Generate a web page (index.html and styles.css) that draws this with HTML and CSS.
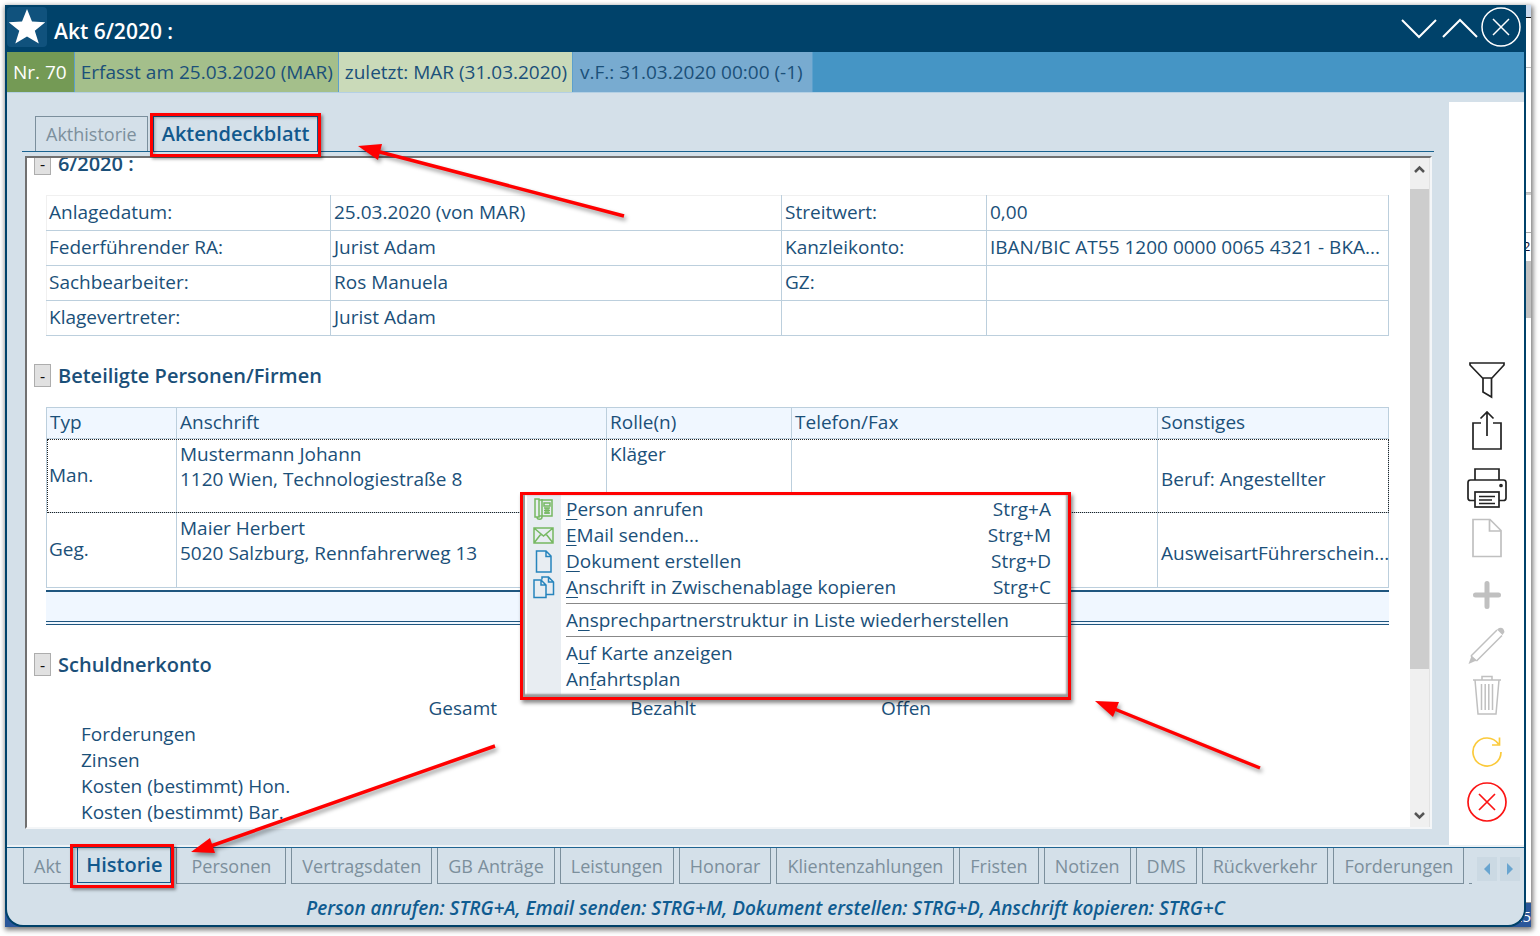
FILE: index.html
```html
<!DOCTYPE html>
<html lang="de">
<head>
<meta charset="utf-8">
<title>Akt 6/2020</title>
<link rel="stylesheet" href="styles.css">
</head>
<body>
<div class="desktop">
  <div class="behind" aria-hidden="true">
    <div class="behind-title"></div>
    <div class="behind-tool"></div>
    <div class="behind-area"></div>
    <div class="behind-ruler"></div>
    <div class="behind-line">2</div>
    <div class="behind-thumb"></div>
    <div class="behind-rest"></div>
    <div class="behind-status">25</div>
  </div>

  <main class="window">
    <header class="titlebar">
      <button class="star" type="button" aria-label="Favorit">
        <svg viewBox="0 0 40 40"><path d="M20 2l5 12.600 13.300.6-10.500 8.600 4 12.700L20 29.500 8.300 36.500l4-12.700L1.700 15.200l13.300-.6z"/></svg>
      </button>
      <h1 class="title">Akt 6/2020 :</h1>
      <div class="window-buttons">
        <button type="button" aria-label="Nach unten"><svg viewBox="0 0 40 40"><path d="M3 13l17 17 17-17"/></svg></button>
        <button type="button" aria-label="Nach oben"><svg viewBox="0 0 40 40"><path d="M3 30l17-17 17 17"/></svg></button>
        <button type="button" aria-label="Schließen"><svg class="thin" viewBox="0 0 40 40"><circle cx="20" cy="20" r="19"/><path d="M12 12l16 16M28 12L12 28"/></svg></button>
      </div>
    </header>

    <div class="status">
      <span class="status-nr">Nr. 70</span>
      <span class="status-created">Erfasst am 25.03.2020 (MAR)</span>
      <span class="status-last">zuletzt: MAR (31.03.2020)</span>
      <span class="status-due">v.F.: 31.03.2020 00:00 (-1)</span>
    </div>

    <div class="body">
      <section class="content">
        <nav class="tabs tabs-top">
          <button class="tab" type="button">Akthistorie</button>
          <button class="tab active marked" type="button">Aktendeckblatt</button>
        </nav>

        <div class="panel">
          <div class="sheet">
            <div class="section-head section-first"><button class="fold" type="button" aria-label="Zuklappen">-</button><h2>6/2020 :</h2></div>
            <table class="grid facts">
              <colgroup><col class="f-label"><col><col class="f-label2"><col class="f-value2"></colgroup>
              <tr><th>Anlagedatum:</th><td>25.03.2020 (von MAR)</td><td>Streitwert:</td><td>0,00</td></tr>
              <tr><th>Federführender RA:</th><td>Jurist Adam</td><td>Kanzleikonto:</td><td>IBAN/BIC AT55 1200 0000 0065 4321 - BKA...</td></tr>
              <tr><th>Sachbearbeiter:</th><td>Ros Manuela</td><td>GZ:</td><td></td></tr>
              <tr><th>Klagevertreter:</th><td>Jurist Adam</td><td></td><td></td></tr>
            </table>

            <div class="section-head"><button class="fold" type="button" aria-label="Zuklappen">-</button><h2>Beteiligte Personen/Firmen</h2></div>
            <table class="grid people">
              <colgroup><col class="p-type"><col><col class="p-role"><col class="p-phone"><col class="p-misc"></colgroup>
              <thead><tr><th>Typ</th><th>Anschrift</th><th>Rolle(n)</th><th>Telefon/Fax</th><th>Sonstiges</th></tr></thead>
              <tbody>
                <tr class="selected"><td>Man.</td><td class="top">Mustermann Johann<br>1120 Wien, Technologiestraße 8</td><td class="top">Kläger</td><td></td><td class="misc">Beruf: Angestellter</td></tr>
                <tr><td>Geg.</td><td class="top">Maier Herbert<br>5020 Salzburg, Rennfahrerweg 13</td><td></td><td></td><td class="misc">AusweisartFührerschein...</td></tr>
              </tbody>
            </table>
            <div class="table-foot"></div>

            <div class="section-head section-account"><button class="fold" type="button" aria-label="Zuklappen">-</button><h2>Schuldnerkonto</h2></div>
            <table class="account">
              <thead><tr><td></td><th>Gesamt</th><th>Bezahlt</th><th>Offen</th><td></td></tr></thead>
              <tbody>
                <tr><th colspan="5">Forderungen</th></tr>
                <tr><th colspan="5">Zinsen</th></tr>
                <tr><th colspan="5">Kosten (bestimmt) Hon.</th></tr>
                <tr><th colspan="5">Kosten (bestimmt) Bar.</th></tr>
              </tbody>
            </table>
          </div>
          <div class="scrollbar">
            <button type="button" aria-label="Nach oben blättern"><svg viewBox="0 0 19 31"><path d="M5 14l4.500-4.500L14 14"/></svg></button>
            <div class="track"><div class="thumb"></div></div>
            <button type="button" aria-label="Nach unten blättern"><svg viewBox="0 0 19 31"><path d="M5 17l4.500 4.500L14 17"/></svg></button>
          </div>
        </div>
      </section>

      <aside class="tools">
        <div class="tool-group">
          <button type="button" aria-label="Filtern"><svg viewBox="0 0 40 40"><path d="M3 2h34v2L25 17H15.500L3 4zM16 17v14l8.500 5V17"/></svg></button>
          <button type="button" aria-label="Exportieren"><svg viewBox="0 0 40 40"><path d="M14 12H6v26h28V12h-8M20 25V1M13.500 7.500L20 1l6.500 6.500"/></svg></button>
        </div>
        <div class="tool-group">
          <button type="button" aria-label="Drucken"><svg viewBox="0 0 40 40"><path d="M8 12V1h24v11M8 32.500H3.500q-2.500 0-2.500-2.500V14.500Q1 12 3.500 12h33q2.500 0 2.500 2.500V30q0 2.500-2.500 2.500H32"/><rect x="8" y="24" width="24" height="15"/><path d="M12 28.500h16M12 32h13M12 35.500h16"/><circle cx="34" cy="17.500" r="1"/></svg></button>
          <button class="off" type="button" aria-label="Neues Dokument"><svg viewBox="0 0 40 40"><path d="M6 1.500h17L34 12.500v26H6zM22.500 1.500V13H34"/></svg></button>
        </div>
        <div class="tool-group">
          <button class="off" type="button" aria-label="Hinzufügen"><svg viewBox="0 0 40 40"><path class="bold" d="M20 8.500v23M8.500 20h23"/></svg></button>
          <button class="off" type="button" aria-label="Bearbeiten"><svg viewBox="0 0 40 40"><path d="M4 31L30 5M9.500 36L35 10.500" class="pencil"/><path d="M4 31l5.500 5" class="thin"/><path d="M30 4.500l2-1.500q4.500-1.500 5.500 4L35.500 10zM1.500 39l3-8 5 4.500z" class="fill"/></svg></button>
          <button class="off" type="button" aria-label="Löschen"><svg viewBox="0 0 40 40"><path d="M6 5h28M15 5V1.500h10V5M8 5l3 34h18l3-34M14.500 9v26M18.200 9v26M21.800 9v26M25.500 9v26" class="thin"/></svg></button>
        </div>
        <div class="tool-group">
          <button class="refresh" type="button" aria-label="Aktualisieren"><svg viewBox="0 0 40 40"><path d="M34 20A14 14 0 1 1 31.500 12M32.500 5.500V13H25"/></svg></button>
          <button class="cancel" type="button" aria-label="Abbrechen"><svg viewBox="0 0 40 40"><circle cx="20" cy="20" r="19"/><path d="M12 12l16 16M28 12L12 28"/></svg></button>
        </div>
      </aside>
    </div>

    <nav class="tabs tabs-bottom">
      <button class="tab" type="button">Akt</button>
      <button class="tab active marked" type="button">Historie</button>
      <button class="tab wide" type="button">Personen</button>
      <button class="tab" type="button">Vertragsdaten</button>
      <button class="tab" type="button">GB Anträge</button>
      <button class="tab" type="button">Leistungen</button>
      <button class="tab" type="button">Honorar</button>
      <button class="tab" type="button">Klientenzahlungen</button>
      <button class="tab" type="button">Fristen</button>
      <button class="tab" type="button">Notizen</button>
      <button class="tab" type="button">DMS</button>
      <button class="tab" type="button">Rückverkehr</button>
      <button class="tab" type="button">Forderungen</button>
      <span class="tab-rest"></span>
      <span class="tab-scroll">
        <button type="button" aria-label="Tabs zurück"><svg viewBox="0 0 20 24"><path d="M13 6v12L7 12z"/></svg></button>
        <button type="button" aria-label="Tabs vor"><svg viewBox="0 0 20 24"><path d="M7 6v12l6-6z"/></svg></button>
      </span>
    </nav>

    <footer class="hint">Person anrufen: STRG+A, Email senden: STRG+M, Dokument erstellen: STRG+D, Anschrift kopieren: STRG+C</footer>
  </main>

  <div class="menu" role="menu">
    <button type="button" role="menuitem"><svg class="green" viewBox="0 0 24 24"><path d="M3 2h4v18H3zM7 3h13v16H7zM10 2v18M12 6h6v3h-6zM12 11h6M12 13.500h6M12 16h6M14 11v6M16 11v6M5 20c0 3 5 3 5 0"/></svg><span><u>P</u>erson anrufen</span><kbd>Strg+A</kbd></button>
    <button type="button" role="menuitem"><svg class="green" viewBox="0 0 24 24"><path d="M2 5h19v15H2zM2 5l9.500 8L21 5M2 20l7-9M21 20l-7-9"/></svg><span><u>E</u>Mail senden...</span><kbd>Strg+M</kbd></button>
    <button type="button" role="menuitem"><svg viewBox="0 0 24 24"><path d="M4.500 2H14l5 5v16H4.500zM14 2v5.500h5"/></svg><span><u>D</u>okument erstellen</span><kbd>Strg+D</kbd></button>
    <button type="button" role="menuitem"><svg viewBox="0 0 24 24"><path d="M2 5h7l5 5v12.500H2zM9 5v5h5M10 4.500V2h6.500l5 5v12.500H14M16.500 2v5h5"/></svg><span><u>A</u>nschrift in Zwischenablage kopieren</span><kbd>Strg+C</kbd></button>
    <hr>
    <button type="button" role="menuitem"><i></i><span>A<u>n</u>sprechpartnerstruktur in Liste wiederherstellen</span></button>
    <hr>
    <button type="button" role="menuitem"><i></i><span>A<u>u</u>f Karte anzeigen</span></button>
    <button type="button" role="menuitem"><i></i><span>An<u>f</u>ahrtsplan</span></button>
  </div>

  <svg class="arrows" width="1540" height="936" viewBox="0 0 1540 936" aria-hidden="true">
    <path class="shaft" d="M624 216L376 151M495 746L208 847M1260 768L1112 708"/>
    <path class="head" d="M358 146l24-2-4 16zM191 852l19-14 5 15zM1095 701l24 1-6 15z"/>
  </svg>
</div>
</body>
</html>
```
FILE: styles.css
```css
* { box-sizing: border-box; }

body {
  margin: 0;
  background: #fff;
  color: #1b5079;
  font: 19px/26px "Open Sans", "Noto Sans", sans-serif;
}

button {
  margin: 0;
  padding: 0;
  border: 0;
  background: none;
  color: inherit;
  font: inherit;
}

h1, h2 { margin: 0; font-weight: 600; line-height: 26px; }
h1 { font-size: 21px; }
h2 { font-size: 20px; }

svg { display: block; fill: none; stroke: currentColor; stroke-width: 2; }

.desktop {
  position: relative;
  height: 100vh;
  min-height: 700px;
  padding: 5px 9px 9px 5px;
  overflow: hidden;
}

/* strip of the application that lies behind the window */
.behind {
  position: absolute;
  inset: 5px 9px 9px 5px;
  display: flex;
  flex-direction: column;
  align-items: flex-end;
  background: #fff;
  box-shadow: 1px 2px 5px 1px #777;
  color: #fff;
  font-size: 15px;
  overflow: hidden;
}
.behind > div { width: 8px; }
.behind .behind-title { height: 13px; background: #c9d9ee; border-bottom: 1px solid #111; }
.behind .behind-tool { height: 50px; border-bottom: 1px solid #bbb; }
.behind .behind-area { height: 125px; border-bottom: 1px solid #bbb; }
.behind .behind-ruler { height: 40px; border-top: 2px solid #ccc; border-bottom: 1px solid #aaa; }
.behind .behind-line { height: 28px; color: #113; font-size: 13px; }
.behind .behind-thumb { height: 57px; background: #c1c1c1; }
.behind .behind-rest { flex: 1; border-bottom: 1px solid #999; }
.behind .behind-status { width: 100%; height: 24px; background: #2b579a; text-align: right; }

.window {
  position: relative;
  height: 100%;
  margin-right: 5px;
  display: flex;
  flex-direction: column;
  border: 2px solid #00426a;
  border-top: 0;
  border-radius: 0 0 18px 18px;
  background: #d4e0e9;
  overflow: hidden;
}

.titlebar {
  display: flex;
  align-items: center;
  height: 47px;
  padding-right: 3px;
  background: #00426a;
  color: #fff;
}
.star {
  width: 40px;
  height: 40px;
  margin: 0 7px 3px 0;
  border-radius: 4px;
  background: #10527d;
}
.star svg { fill: #fff; stroke: none; }
.title { margin-top: 4px; }
.window-buttons { display: flex; gap: 1px; margin: 0 0 3px auto; }
.window-buttons button { width: 40px; height: 40px; }
.window-buttons .thin { stroke-width: 1.5; }

.status { display: flex; height: 41px; background: #4595c5; border-bottom: 1px solid #b4d0e4; }
.status span { padding: 7px 6px 0 7px; border-right: 1px solid #5ca0cc; }
.status .status-nr { padding-right: 7px; padding-left: 6px; background: #749a55; color: #fff; }
.status .status-created { padding-left: 6px; padding-right: 5px; background: #a4bf8b; }
.status .status-last { padding-left: 6px; padding-right: 5px; background: #cadab9; }
.status .status-due { padding-right: 9px; background: #78abd0; }

.body { flex: 1; min-height: 0; display: flex; }
.content { flex: 1; min-width: 0; display: flex; flex-direction: column; padding: 23px 15px 18px 15px; }

.tabs { display: flex; }
.tab {
  position: relative;
  height: 35px;
  padding: 0 10px;
  border: 1px solid #7b8f9c;
  color: #7c8f9c;
  font-size: 18px;
  white-space: nowrap;
}
.tab.wide { padding: 0 14px; }
.tab.active { padding: 0 8px; color: #12598d; border-color: #12598d; font-size: 20px; font-weight: 600; }
.marked::after {
  content: "";
  position: absolute;
  inset: -4px -4px -6px -4px;
  border: 3px solid #f00;
  box-shadow: 2px 2px 3px #0006, inset 2px 2px 3px #0004;
}
.tabs-top { gap: 5px; padding-left: 13px; border-bottom: 1px solid #19628f; }
.tabs-top .tab { border-bottom: 0; }
.tabs-top .tab.active { z-index: 1; }

.panel {
  flex: 1;
  min-height: 0;
  display: flex;
  margin: 4px 2px 0 3px;
  border: 2px solid #707070;
  border-right-color: #f4f6f8;
  border-bottom-color: #f4f6f8;
  background: #fff;
}
.sheet { flex: 1; min-width: 0; padding: 0 21px 0 19px; overflow: hidden; }

.section-head { display: flex; align-items: center; gap: 7px; height: 23px; margin: 28px 0 20px -12px; }
.section-head h2 { line-height: 24px; }
.section-head.section-first { margin-top: -6px; }
.section-head.section-account { margin: 28px 0 19px -12px; }
.fold { width: 17px; height: 23px; border: 1px solid #adadad; background: #e1e1e1; color: #111; font-size: 16px; line-height: 20px; }

.grid { width: 100%; border-collapse: collapse; table-layout: fixed; }
.grid th, .grid td {
  height: 35px;
  padding: 0 0 1px 3px;
  border: 1px solid #bccfdd;
  font-weight: 400;
  text-align: left;
  line-height: 25px;
  white-space: nowrap;
}
.facts tr:first-child > * { border-top-color: #f0f0f0; }
.facts tr > :first-child { border-left-color: #f0f0f0; }
.facts th { padding: 0 0 2px 2px; }
.f-label { width: 284px; }
.f-label2 { width: 205px; }
.f-value2 { width: 402px; }

.people thead th { height: 31px; background: #f0f7ff; }
.people tbody td { height: 75px; }
.people tbody .selected td { height: 74px; }
.people .selected { outline: 1px dotted #222; outline-offset: -1px; }
.people tbody td:first-child { padding-left: 2px; }
.people td.top { vertical-align: top; padding-top: 3px; }
.people td.misc { padding-top: 8px; }
.p-type { width: 130px; }
.p-role { width: 185px; }
.p-phone { width: 366px; }
.p-misc { width: 231px; }
.table-foot { height: 35px; margin-top: 2px; border-top: 2px solid #1f567f; border-bottom: 4px double #1f567f; background: #f0f7ff; }

.account { width: 100%; border-collapse: collapse; table-layout: fixed; }
.account th, .account td { height: 26px; padding: 0; font-weight: 400; line-height: 26px; text-align: left; }
.account thead th { text-align: right; }
.account thead > tr > :nth-child(1) { width: 252px; }
.account thead > tr > :nth-child(2) { width: 199px; }
.account thead > tr > :nth-child(3) { width: 199px; }
.account thead > tr > :nth-child(4) { width: 235px; }
.account tbody th { padding-left: 35px; }

.scrollbar { display: flex; flex-direction: column; width: 20px; background: #f0f0f0; border-right: 1px solid #e3e3e3; }
.scrollbar button { height: 31px; color: #555; }
.scrollbar svg { height: 31px; width: 19px; stroke-width: 2.5; }
.scrollbar .track { flex: 1; }
.scrollbar .thumb { height: 79%; background: #cdcdcd; }

.tools {
  display: flex;
  flex-direction: column;
  justify-content: flex-end;
  align-items: center;
  gap: 17px;
  width: 75px;
  margin-top: 9px;
  padding-bottom: 25px;
  background: #fff;
  color: #222;
}
.tool-group { display: grid; gap: 10px; }
.tool-group button { width: 40px; height: 40px; }
.tool-group .off { color: #c0c0c0; }
.tool-group .refresh { color: #fbca3b; }
.tool-group .cancel { color: #fb1414; }
.tools svg { stroke-width: 1.7; }
.tools .thin { stroke-width: 1.5; }
.tools .pencil { stroke-width: 1.5; }
.tools .bold { stroke-width: 5; stroke-linecap: round; }
.tools .fill { fill: currentColor; stroke: none; }

.tabs-bottom {
  gap: 5px;
  padding: 0 4px 0 16px;
  border-top: 1px solid #1e6491;
  box-shadow: 0 -2px 0 #edf2f6;
}
.tabs-bottom .tab { border-top: 0; height: 36px; }
.tabs-bottom .active { z-index: 1; height: 35px; }
.tabs-bottom .marked::after { left: -8px; }
.tab-rest { flex: 1; max-width: 8px; border-bottom: 1px solid #7b8f9c; height: 36px; }
.tab-scroll { display: flex; gap: 3px; margin: 9px 0 0 auto; }
.tab-scroll button { width: 20px; height: 24px; background: #cbd9e3; }
.tab-scroll svg { fill: #69a5d0; stroke: none; }

.hint { height: 41px; padding-top: 11px; color: #0f5c91; font-style: italic; font-weight: 600; text-align: center; white-space: nowrap; }

.menu {
  position: absolute;
  left: 520px;
  top: 492px;
  width: 551px;
  padding: 1px 0 5px 4px;
  border: 3px solid #f00;
  background: linear-gradient(90deg, #999 0 2px, #fff 2px 4px, #e8edf2 4px 38px, #fff 38px);
  box-shadow: 2px 3px 4px #0007, inset 0 -3px 2px #999, inset -2px 0 2px #aaa;
}
.menu button { display: flex; align-items: center; width: 100%; height: 26px; padding: 0 17px 0 5px; text-align: left; }
.menu svg, .menu i { flex: none; width: 24px; height: 24px; margin-right: 10px; }
.menu svg { color: #2684bd; stroke-width: 1.5; }
.menu svg.green { color: #76b862; }
.menu kbd { margin-left: auto; font: inherit; }
.menu u { text-underline-offset: 3px; }
.menu hr { height: 1px; margin: 3px 0 3px 39px; border: 0; background: #888; }

.arrows { position: absolute; left: 0; top: 0; pointer-events: none; filter: drop-shadow(2px 3px 2px #0006); }
.arrows .shaft { stroke: #f00; stroke-width: 3.5; }
.arrows .head { fill: #f00; stroke: none; }
```
